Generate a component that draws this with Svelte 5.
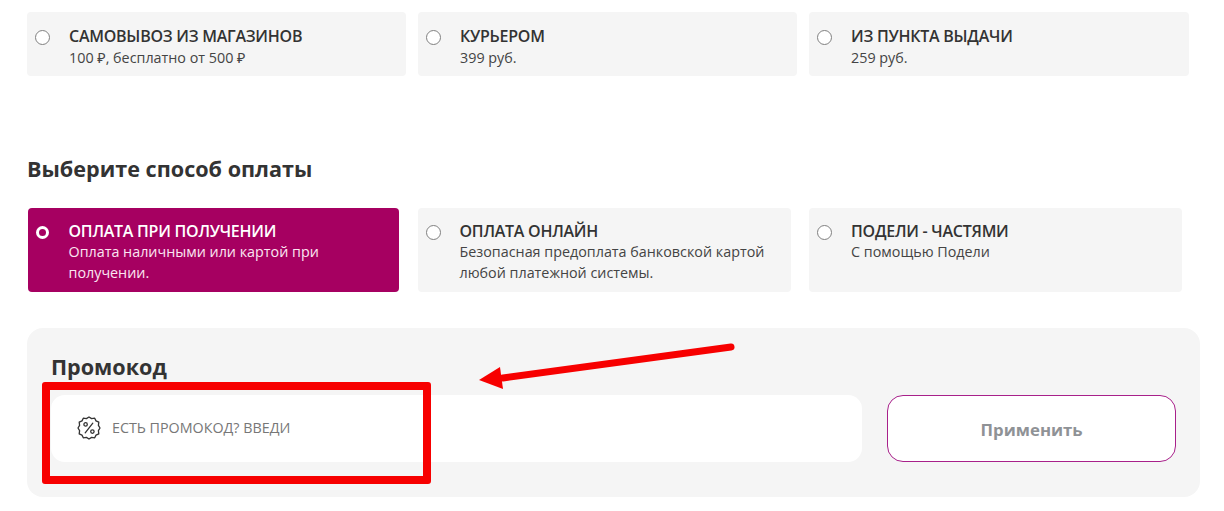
<script>
  const delivery = [
    { title: 'САМОВЫВОЗ ИЗ МАГАЗИНОВ', sub: ['100 ₽, бесплатно от 500 ₽'] },
    { title: 'КУРЬЕРОМ', sub: ['399 руб.'] },
    { title: 'ИЗ ПУНКТА ВЫДАЧИ', sub: ['259 руб.'] }
  ];
  const payment = [
    { title: 'ОПЛАТА ПРИ ПОЛУЧЕНИИ', sub: ['Оплата наличными или картой при', 'получении.'], active: true },
    { title: 'ОПЛАТА ОНЛАЙН', sub: ['Безопасная предоплата банковской картой', 'любой платежной системы.'] },
    { title: 'ПОДЕЛИ - ЧАСТЯМИ', sub: ['С помощью Подели'] }
  ];
</script>

{#snippet card(o)}
  <div class="card" class:active={o.active}>
    <span class="radio"></span>
    <div class="txt">
      <div class="title">{o.title}</div>
      {#each o.sub as s}<div class="sub">{s}</div>{/each}
    </div>
  </div>
{/snippet}

<div class="page">
  <div class="row delivery">
    {#each delivery as o}{@render card(o)}{/each}
  </div>
  <h2>Выберите способ оплаты</h2>
  <div class="row payment">
    {#each payment as o}{@render card(o)}{/each}
  </div>
  <section class="promo">
    <h3>Промокод</h3>
    <div class="controls">
      <div class="input">
        <svg width="26" height="26" viewBox="0 0 26 26" fill="none" stroke="#333" stroke-width="1.3" stroke-linecap="round" stroke-linejoin="round">
          <path d="M13 2 L15.6 3.6 L18.7 3.2 L20 5.9 L22.8 7.2 L22.4 10.3 L24 13 L22.4 15.7 L22.8 18.8 L20 20.1 L18.7 22.8 L15.6 22.4 L13 24 L10.4 22.4 L7.3 22.8 L6 20.1 L3.2 18.8 L3.6 15.7 L2 13 L3.6 10.3 L3.2 7.2 L6 5.9 L7.3 3.2 L10.4 3.6 Z" />
          <path d="M16.8 8.2 L9.2 17.8" />
          <circle cx="9.6" cy="9.4" r="1.7" />
          <circle cx="16.4" cy="16.6" r="1.7" />
        </svg>
        <span class="ph">ЕСТЬ ПРОМОКОД? ВВЕДИ</span>
      </div>
      <button type="button">Применить</button>
    </div>
  </section>

  <div class="mark"></div>
  <svg class="arrow" width="270" height="50" viewBox="0 0 270 50">
    <path d="M253 7 L25 38" stroke="#f70000" stroke-width="7" stroke-linecap="round" fill="none" />
    <path d="M1 40 L22 27 L25 49 Z" fill="#f70000" />
  </svg>
</div>

<style>
  :global(body) { margin: 0; background: #fff; }
  .page {
    position: relative;
    width: 1224px;
    height: 511px;
    overflow: hidden;
    padding: 12px 25px 0 27px;
    box-sizing: border-box;
    font-family: "Open Sans", "Noto Sans", sans-serif;
    color: #333;
  }
  .row { display: grid; }
  .delivery { grid-template-columns: 379px 379px 380px; column-gap: 12px; }
  .delivery .card { height: 64px; }
  .payment { grid-template-columns: 371px 373px 373px; column-gap: 18.5px; margin-left: 1px; }
  .payment .card { height: 84px; padding-top: 13px; }
  .payment .title { line-height: 20px; }
  .card {
    display: flex;
    align-items: flex-start;
    box-sizing: border-box;
    padding: 14px 10px 0 8px;
    background: #f5f5f5;
    border-radius: 4px;
  }
  .radio {
    flex: none;
    width: 15px;
    height: 15px;
    margin-top: 4px;
    box-sizing: border-box;
    border: 1.3px solid #808080;
    border-radius: 50%;
    background: #fff;
  }
  .txt { margin-left: 19px; }
  .title { font-size: 16px; line-height: 21px; font-weight: 600; letter-spacing: -0.25px; color: #333; }
  .sub { font-size: 14.33px; line-height: 21px; color: #444; }
  .active { background: #a60061; }
  .active .title { color: #fff; }
  .active .sub { color: #fbe6f2; }
  .active .radio { width: 13px; height: 13px; margin: 5px 1px 0 0; border: 3.5px solid #fff; background: #a60061; }
  .payment .active { padding-left: 7.5px; }
  .active .txt { margin-left: 19px; }
  h2 {
    margin: 79px 0 25px;
    font-size: 21.6px;
    line-height: 28px;
    font-weight: 700;
    color: #333;
  }
  .promo {
    margin-top: 36px;
    width: 1173px;
    height: 169px;
    box-sizing: border-box;
    padding: 24px 24px 0;
    background: #f5f5f5;
    border-radius: 16px;
  }
  h3 { margin: 0 0 13px; font-size: 21.6px; line-height: 30px; font-weight: 700; color: #333; }
  .controls { display: flex; gap: 25px; }
  .input {
    display: flex;
    align-items: center;
    width: 812px;
    height: 67px;
    box-sizing: border-box;
    padding: 0 0 2px 25px;
    background: #fff;
    border-radius: 14px;
  }
  .ph { margin-left: 10px; font-size: 14.3px; color: #777; }
  button {
    width: 289px;
    height: 67px;
    padding: 2px 0 0;
    background: #fff;
    border: 1px solid #a8208a;
    border-radius: 16px;
    font: 700 16.8px "Open Sans", sans-serif;
    color: #8f9296;
  }
  .mark {
    position: absolute;
    left: 42px;
    top: 382px;
    width: 389px;
    height: 102px;
    box-sizing: border-box;
    border: 8px solid #f70000;
    border-radius: 3px;
  }
  .arrow { position: absolute; left: 478px; top: 340px; }
</style>
